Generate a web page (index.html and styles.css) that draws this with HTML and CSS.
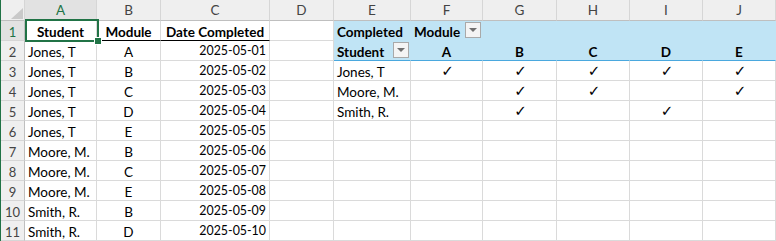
FILE: index.html
```html
<!DOCTYPE html>
<html>
<head>
<meta charset="utf-8">
<link rel="stylesheet" href="styles.css">
</head>
<body>
<div class="sheet">
  <div class="hd corner"><span class="tri"></span></div>
  <div class="hd col sel">A</div>
  <div class="hd col">B</div>
  <div class="hd col">C</div>
  <div class="hd col">D</div>
  <div class="hd col">E</div>
  <div class="hd col">F</div>
  <div class="hd col">G</div>
  <div class="hd col">H</div>
  <div class="hd col">I</div>
  <div class="hd col">J</div>

  <div class="rh sel">1</div>
  <div class="c ctr b ul">Student</div>
  <div class="c ctr b ul">Module</div>
  <div class="c ctr b ul">Date Completed</div>
  <div class="c"></div>
  <div class="c pv b">Completed</div>
  <div class="c pv b">Module<span class="filt"><span class="arr"></span></span></div>
  <div class="c pv"></div>
  <div class="c pv"></div>
  <div class="c pv"></div>
  <div class="c pv"></div>

  <div class="rh">2</div>
  <div class="c">Jones, T</div>
  <div class="c ctr">A</div>
  <div class="c num">2025-05-01</div>
  <div class="c"></div>
  <div class="c pv pvl b">Student<span class="filt"><span class="arr"></span></span></div>
  <div class="c pv pvl b ctr">A</div>
  <div class="c pv pvl b ctr">B</div>
  <div class="c pv pvl b ctr">C</div>
  <div class="c pv pvl b ctr">D</div>
  <div class="c pv pvl b ctr">E</div>

  <div class="rh">3</div>
  <div class="c">Jones, T</div>
  <div class="c ctr">B</div>
  <div class="c num">2025-05-02</div>
  <div class="c"></div>
  <div class="c">Jones, T</div>
  <div class="c ctr ck">✓</div>
  <div class="c ctr ck">✓</div>
  <div class="c ctr ck">✓</div>
  <div class="c ctr ck">✓</div>
  <div class="c ctr ck">✓</div>

  <div class="rh">4</div>
  <div class="c">Jones, T</div>
  <div class="c ctr">C</div>
  <div class="c num">2025-05-03</div>
  <div class="c"></div>
  <div class="c">Moore, M.</div>
  <div class="c"></div>
  <div class="c ctr ck">✓</div>
  <div class="c ctr ck">✓</div>
  <div class="c"></div>
  <div class="c ctr ck">✓</div>

  <div class="rh">5</div>
  <div class="c">Jones, T</div>
  <div class="c ctr">D</div>
  <div class="c num">2025-05-04</div>
  <div class="c"></div>
  <div class="c">Smith, R.</div>
  <div class="c"></div>
  <div class="c ctr ck">✓</div>
  <div class="c"></div>
  <div class="c ctr ck">✓</div>
  <div class="c"></div>

  <div class="rh">6</div>
  <div class="c">Jones, T</div>
  <div class="c ctr">E</div>
  <div class="c num">2025-05-05</div>
  <div class="c"></div><div class="c"></div><div class="c"></div><div class="c"></div><div class="c"></div><div class="c"></div><div class="c"></div>

  <div class="rh">7</div>
  <div class="c">Moore, M.</div>
  <div class="c ctr">B</div>
  <div class="c num">2025-05-06</div>
  <div class="c"></div><div class="c"></div><div class="c"></div><div class="c"></div><div class="c"></div><div class="c"></div><div class="c"></div>

  <div class="rh">8</div>
  <div class="c">Moore, M.</div>
  <div class="c ctr">C</div>
  <div class="c num">2025-05-07</div>
  <div class="c"></div><div class="c"></div><div class="c"></div><div class="c"></div><div class="c"></div><div class="c"></div><div class="c"></div>

  <div class="rh">9</div>
  <div class="c">Moore, M.</div>
  <div class="c ctr">E</div>
  <div class="c num">2025-05-08</div>
  <div class="c"></div><div class="c"></div><div class="c"></div><div class="c"></div><div class="c"></div><div class="c"></div><div class="c"></div>

  <div class="rh">10</div>
  <div class="c">Smith, R.</div>
  <div class="c ctr">B</div>
  <div class="c num">2025-05-09</div>
  <div class="c"></div><div class="c"></div><div class="c"></div><div class="c"></div><div class="c"></div><div class="c"></div><div class="c"></div>

  <div class="rh">11</div>
  <div class="c">Smith, R.</div>
  <div class="c ctr">D</div>
  <div class="c num">2025-05-10</div>
  <div class="c"></div><div class="c"></div><div class="c"></div><div class="c"></div><div class="c"></div><div class="c"></div><div class="c"></div>

  <div class="selbox"><span class="handle"></span></div>
</div>
</body>
</html>
```

FILE: styles.css
```css
* { box-sizing: border-box; }
html, body { margin: 0; padding: 0; background: #ffffff; }
body { width: 776px; height: 241px; overflow: hidden; }

.sheet {
  position: relative;
  display: grid;
  grid-template-columns: 24px 72px 64px 109px 64px 77px 72px 74px 73px 73px 73px;
  grid-template-rows: 21px repeat(11, 20px);
  border-left: 1px solid #217346;
  font-family: Lato, "Liberation Sans", sans-serif;
  font-size: 13.5px;
  color: #000;
}

.hd {
  background: #efefef;
  border-right: 1px solid #d6d6d6;
  border-bottom: 1px solid #bfbfbf;
  color: #444;
  display: flex;
  align-items: flex-end;
  justify-content: center;
  line-height: 14px;
  padding-bottom: 3px;
}
.hd.sel { color: #217346; background: #e2e2e2; }
.corner { justify-content: flex-end; padding: 0 1px 1px 0; }
.tri {
  width: 12px; height: 11px;
  background: #c9c9c9;
  clip-path: polygon(100% 0, 100% 100%, 0 100%);
}

.rh {
  background: #efefef;
  border-right: 1px solid #bfbfbf;
  border-bottom: 1px solid #d6d6d6;
  color: #444;
  display: flex;
  align-items: flex-end;
  justify-content: center;
  line-height: 14px;
  padding-bottom: 1px;
  font-size: 13px;
}
.rh.sel { color: #217346; background: #e2e2e2; }

.c {
  border-right: 1px solid #dadada;
  border-bottom: 1px solid #dadada;
  display: flex;
  align-items: flex-end;
  padding: 0 3px 1px 3px;
  line-height: 14px;
  white-space: nowrap;
  overflow: hidden;
}
.ctr { justify-content: center; }
.num { justify-content: flex-end; font-size: 12.4px; padding-bottom: 2px; }
.b { font-weight: bold; }
.ul { border-bottom-color: #000; }

.pv { background: #c0e4f5; border-right-color: #c0e4f5; border-bottom-color: #c0e4f5; }
.pvl { border-bottom-color: #4aa8de; }

.filt {
  margin-left: auto;
  margin-right: -2px;
  margin-bottom: 0;
  width: 16px; height: 16px;
  border: 1px solid #a9a9a9;
  background: #f4f4f4;
  display: flex;
  align-items: center;
  justify-content: center;
  align-self: center;
}
.arr {
  width: 0; height: 0;
  border-left: 4px solid transparent;
  border-right: 4px solid transparent;
  border-top: 4px solid #6f6f6f;
}

.ck {
  font-family: "DejaVu Sans", sans-serif;
  font-size: 15px;
  padding-bottom: 2px;
  padding-left: 5px;
}

.selbox {
  position: absolute;
  left: 24px; top: 19px;
  width: 74px; height: 23px;
  border: 2px solid #217346;
}
.handle {
  position: absolute;
  right: -4px; bottom: -4px;
  width: 6px; height: 6px;
  background: #217346;
  border: 1px solid #fff;
  box-sizing: content-box;
  margin: -1px;
}
```
